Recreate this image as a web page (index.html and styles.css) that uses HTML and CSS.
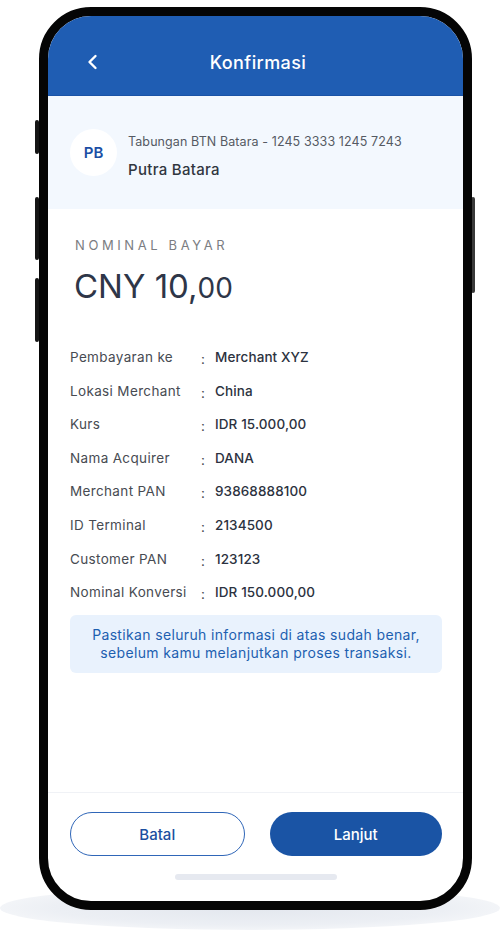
FILE: index.html
```html
<!DOCTYPE html>
<html lang="id">
<head>
    <meta charset="UTF-8">
    <meta name="viewport" content="width=device-width, initial-scale=1.0">
    <title>Konfirmasi</title>
    <link rel="stylesheet" href="styles.css">
</head>
<body>
    <div class="stage">
        <div class="floor-shadow"></div>
        <span class="side-key key-mute"></span>
        <span class="side-key key-up"></span>
        <span class="side-key key-down"></span>
        <span class="side-key key-power"></span>

        <div class="phone">
            <div class="screen">
                <!-- Top bar -->
                <header class="topbar">
                    <button class="back-btn" type="button" aria-label="Kembali">
                        <svg width="12" height="16" viewBox="0 0 12 16">
                            <path d="M8.5 2 L2.5 8 L8.5 14" fill="none" stroke="#fff" stroke-width="2.4" stroke-linecap="round" stroke-linejoin="round"/>
                        </svg>
                    </button>
                    <h1 class="title">Konfirmasi</h1>
                    <span class="back-spacer"></span>
                </header>

                <!-- Source account -->
                <section class="account">
                    <div class="avatar">PB</div>
                    <div class="account-info">
                        <p class="account-number">Tabungan BTN Batara - 1245 3333 1245 7243</p>
                        <p class="account-name">Putra Batara</p>
                    </div>
                </section>

                <main class="content">
                    <p class="amount-label">NOMINAL BAYAR</p>
                    <p class="amount">CNY 10,<span class="cents">00</span></p>

                    <div class="details">
                        <div class="row"><span class="key">Pembayaran ke</span><span class="sep">:</span><span class="val">Merchant XYZ</span></div>
                        <div class="row"><span class="key">Lokasi Merchant</span><span class="sep">:</span><span class="val">China</span></div>
                        <div class="row"><span class="key">Kurs</span><span class="sep">:</span><span class="val">IDR 15.000,00</span></div>
                        <div class="row"><span class="key">Nama Acquirer</span><span class="sep">:</span><span class="val">DANA</span></div>
                        <div class="row"><span class="key">Merchant PAN</span><span class="sep">:</span><span class="val">93868888100</span></div>
                        <div class="row"><span class="key">ID Terminal</span><span class="sep">:</span><span class="val">2134500</span></div>
                        <div class="row"><span class="key">Customer PAN</span><span class="sep">:</span><span class="val">123123</span></div>
                        <div class="row"><span class="key">Nominal Konversi</span><span class="sep">:</span><span class="val">IDR 150.000,00</span></div>
                    </div>

                    <div class="notice">
                        Pastikan seluruh informasi di atas sudah benar,<br>
                        sebelum kamu melanjutkan proses transaksi.
                    </div>
                </main>

                <footer class="actions">
                    <div class="buttons">
                        <button type="button" class="btn btn-outline">Batal</button>
                        <button type="button" class="btn btn-primary">Lanjut</button>
                    </div>
                    <div class="home-indicator"></div>
                </footer>
            </div>
        </div>
    </div>
</body>
</html>
```

FILE: styles.css
```css
body {
    margin: 0;
    background-color: #ffffff;
    font-family: 'Inter', 'Noto Sans', sans-serif;
    color: #2e3444;
}

p {
    margin: 0;
}

.stage {
    position: relative;
    width: 500px;
    height: 947px;
    overflow: hidden;
}

/* soft shadow under the device */
.floor-shadow {
    position: absolute;
    left: 0;
    top: 886px;
    width: 500px;
    height: 44px;
    border-radius: 50%;
    background: radial-gradient(ellipse at center, #e3e7ee 0%, #eceff4 55%, rgba(240, 242, 246, 0) 100%);
}

.side-key {
    position: absolute;
    width: 4px;
    background-color: #151515;
    border-radius: 2px;
}

.key-mute { left: 35px; top: 120px; height: 34px; }
.key-up { left: 35px; top: 197px; height: 63px; }
.key-down { left: 35px; top: 278px; height: 64px; }
.key-power { left: 471px; top: 197px; height: 96px; background-color: #3a3a3a; }

.phone {
    position: relative;
    box-sizing: border-box;
    width: 433px;
    height: 903px;
    margin: 7px 0 0 39px;
    border: 9px solid #050505;
    border-radius: 52px;
    background-color: #ffffff;
    overflow: hidden;
}

.screen {
    display: flex;
    flex-direction: column;
    height: 100%;
}

/* header */
.topbar {
    display: flex;
    align-items: center;
    justify-content: space-between;
    height: 79px;
    padding: 0 26px 0 39px;
    background-color: #1f5db3;
    border-bottom: 1px solid #1a53a6;
    flex-shrink: 0;
}

.back-btn {
    display: flex;
    align-items: center;
    width: 20px;
    height: 24px;
    padding: 0;
    margin-top: 12px;
    background: none;
    border: none;
}

.back-spacer {
    width: 28px;
}

.title {
    margin: 13px 0 0;
    font-size: 18px;
    font-weight: 500;
    color: #ffffff;
    letter-spacing: 0.4px;
}

/* account card */
.account {
    display: flex;
    align-items: center;
    gap: 11px;
    height: 113px;
    padding: 0 22px;
    background-color: #f3f8fe;
    flex-shrink: 0;
}

.avatar {
    display: flex;
    align-items: center;
    justify-content: center;
    width: 47px;
    height: 47px;
    border-radius: 50%;
    background-color: #ffffff;
    color: #1c4fa5;
    font-size: 15px;
    font-weight: 600;
}

.account-info {
    display: flex;
    flex-direction: column;
    gap: 11px;
    margin-top: 7px;
}

.account-number {
    font-size: 12.5px;
    color: #555a63;
    letter-spacing: 0.1px;
}

.account-name {
    font-size: 15px;
    font-weight: 500;
    color: #30363f;
    letter-spacing: 0.3px;
}

/* main body */
.content {
    flex: 1;
    padding: 28px 21px 0 22px;
}

.amount-label {
    margin-left: 5px;
    font-size: 13px;
    line-height: 16px;
    letter-spacing: 3.6px;
    color: #7b7d82;
}

.amount {
    margin: 13px 0 0 4px;
    font-size: 33px;
    line-height: 40px;
    font-weight: 400;
    color: #2e3648;
}

.amount .cents {
    font-size: 28px;
}

.details {
    display: flex;
    flex-direction: column;
    gap: 13.6px;
    margin-top: 39px;
}

.row {
    display: flex;
    align-items: center;
    height: 20px;
    font-size: 13.5px;
}

.key {
    width: 131px;
    color: #474b52;
    letter-spacing: 0.35px;
}

.sep {
    width: 14px;
    color: #474b52;
    padding-top: 4px;
}

.val {
    font-weight: 500;
    color: #2c3240;
    letter-spacing: 0.1px;
}

.notice {
    margin-top: 13px;
    padding: 11px 4px;
    border-radius: 6px;
    background-color: #e9f2fd;
    color: #1d5fb0;
    font-size: 14px;
    line-height: 18px;
    letter-spacing: 0.35px;
    text-align: center;
}

/* bottom actions */
.actions {
    display: flex;
    flex-direction: column;
    align-items: center;
    height: 108px;
    border-top: 1px solid #f0f2f6;
    flex-shrink: 0;
}

.buttons {
    display: flex;
    gap: 25px;
    width: 100%;
    box-sizing: border-box;
    padding: 19px 21px 0 22px;
}

.btn {
    flex: 1;
    height: 44px;
    border-radius: 22px;
    font-family: inherit;
    font-size: 15px;
    font-weight: 500;
    cursor: pointer;
}

.btn-outline {
    background-color: #ffffff;
    border: 1.5px solid #2f66b8;
    color: #1c4fa0;
}

.btn-primary {
    background-color: #1a54a5;
    border: none;
    color: #ffffff;
}

.home-indicator {
    width: 162px;
    height: 6px;
    margin-top: 18px;
    border-radius: 3px;
    background-color: #e6e9f0;
}
```
